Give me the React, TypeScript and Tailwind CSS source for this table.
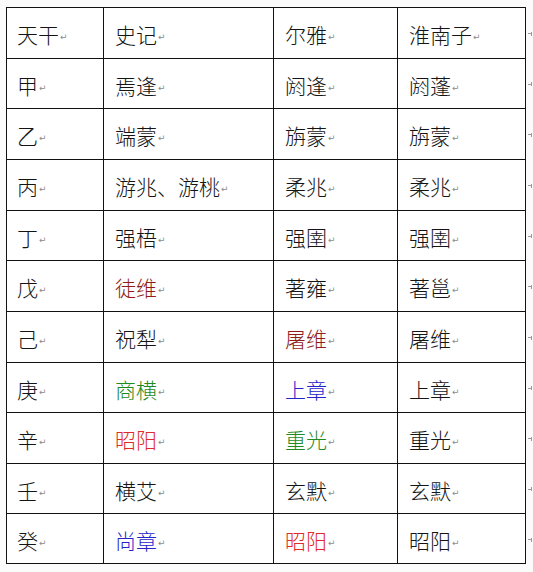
import React from "react";

type Cell = { t: string; c?: string };

const rows: { h: string; cells: Cell[] }[] = [
  { h: "h-[51px]", cells: [{ t: "天干" }, { t: "史记" }, { t: "尔雅" }, { t: "淮南子" }] },
  { h: "h-[50px]", cells: [{ t: "甲" }, { t: "焉逢" }, { t: "阏逢" }, { t: "阏蓬" }] },
  { h: "h-[51px]", cells: [{ t: "乙" }, { t: "端蒙" }, { t: "旃蒙" }, { t: "旃蒙" }] },
  { h: "h-[51px]", cells: [{ t: "丙" }, { t: "游兆、游桃" }, { t: "柔兆" }, { t: "柔兆" }] },
  { h: "h-[50px]", cells: [{ t: "丁" }, { t: "强梧" }, { t: "强圉" }, { t: "强圉" }] },
  { h: "h-[51px]", cells: [{ t: "戊" }, { t: "徒维", c: "text-[#8f1c1c]" }, { t: "著雍" }, { t: "著邕" }] },
  { h: "h-[51px]", cells: [{ t: "己" }, { t: "祝犁" }, { t: "屠维", c: "text-[#8f1c1c]" }, { t: "屠维" }] },
  { h: "h-[50px]", cells: [{ t: "庚" }, { t: "商横", c: "text-[#1f8a1f]" }, { t: "上章", c: "text-[#2424c8]" }, { t: "上章" }] },
  { h: "h-[51px]", cells: [{ t: "辛" }, { t: "昭阳", c: "text-[#e02a2a]" }, { t: "重光", c: "text-[#1f8a1f]" }, { t: "重光" }] },
  { h: "h-[50px]", cells: [{ t: "壬" }, { t: "横艾" }, { t: "玄默" }, { t: "玄默" }] },
  { h: "h-[51px]", cells: [{ t: "癸" }, { t: "尚章", c: "text-[#2424c8]" }, { t: "昭阳", c: "text-[#e02a2a]" }, { t: "昭阳" }] },
];

const widths = ["w-[97px]", "w-[170px]", "w-[124px]", "w-[128px]"];

function Mark() {
  return (
    <span
      className="ml-[1px] text-[9px] leading-none text-[#8c8c8c] relative top-[3px]"
      style={{ fontFamily: '"DejaVu Sans", sans-serif' }}
    >
      ↵
    </span>
  );
}

export default function App() {
  return (
    <div
      className="w-[533px] h-[572px] bg-[#fbfbfb] pt-[7px] pl-[6px]"
      style={{ fontFamily: '"Noto Sans CJK SC", "Liberation Sans", sans-serif' }}
    >
      <div className="flex flex-col">
        {rows.map((r, i) => (
          <div key={i} className="flex items-center">
            <div className={`flex ${r.h} bg-white border-r border-[#111] ${i === rows.length - 1 ? "border-b" : ""}`}>
              {r.cells.map((c, j) => (
                <div
                  key={j}
                  className={`${widths[j]} border-l border-t border-[#111] flex items-center pt-[3px] ${
                    j === 0 ? "pl-[10px]" : "pl-[11px]"
                  }`}
                >
                  <span className={`text-[21px] font-light leading-none ${c.c ?? "text-[#141414]"}`}>{c.t}</span>
                  <Mark />
                </div>
              ))}
            </div>
            <div className="ml-[2px] flex items-center pt-[2px]">
              <span className="w-[3px] h-[1px] bg-[#999]" />
              <span className="w-[1px] h-[4px] bg-[#999]" />
            </div>
          </div>
        ))}
      </div>
    </div>
  );
}
